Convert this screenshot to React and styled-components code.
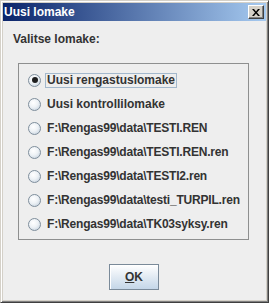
import React, { useState } from "react";
import styled, { createGlobalStyle } from "styled-components";

const Global = createGlobalStyle`
  html, body { margin: 0; padding: 0; background: #d4d0c8; }
  body { font-family: "Liberation Sans", Arial, sans-serif; }
`;

const Window = styled.div`
  width: 269px;
  height: 303px;
  box-sizing: border-box;
  display: flex;
  flex-direction: column;
  background: #d4d0c8;
  border-top: 1px solid #d4d0c8;
  border-left: 1px solid #d4d0c8;
  border-right: 1px solid #404040;
  border-bottom: 1px solid #404040;
  box-shadow: inset 1px 1px 0 #ffffff, inset -1px -1px 0 #808080;
  padding: 2px;
`;

const TitleBar = styled.div`
  height: 18px;
  flex: none;
  display: flex;
  align-items: center;
  justify-content: space-between;
  padding: 0 2px 0 1px;
  background: linear-gradient(to right, #0a246a, #a6caf0);
`;

const Title = styled.span`
  color: #ffffff;
  font-weight: bold;
  font-size: 12px;
  line-height: 18px;
`;

const CloseButton = styled.div`
  width: 16px;
  height: 14px;
  box-sizing: border-box;
  background: #d4d0c8;
  border-top: 1px solid #ffffff;
  border-left: 1px solid #ffffff;
  border-right: 1px solid #404040;
  border-bottom: 1px solid #404040;
  box-shadow: inset -1px -1px 0 #808080;
  display: flex;
  align-items: center;
  justify-content: center;
`;

const Content = styled.div`
  flex: 1;
  background: #eeeeee;
  display: flex;
  flex-direction: column;
  padding: 11px 17px 0 10px;
`;

const Label = styled.div`
  color: #333333;
  font-weight: bold;
  font-size: 12px;
  line-height: 15px;
  margin-bottom: 16px;
`;

const Group = styled.div`
  margin-left: 5px;
  border: 1px solid #8e8f8f;
  padding: 4px 0 3px 9px;
  display: flex;
  flex-direction: column;
`;

const Row = styled.label`
  height: 24px;
  display: flex;
  align-items: center;
  gap: 4px;
  cursor: default;
`;

const RadioCircle = styled.span`
  width: 13px;
  height: 13px;
  box-sizing: border-box;
  border-radius: 50%;
  border: 1px solid #7f8e9c;
  background: radial-gradient(circle at 40% 35%, #ffffff 0%, #eef2f6 45%, #bccbd9 100%);
  display: flex;
  align-items: center;
  justify-content: center;
  flex: none;
`;

const Dot = styled.span`
  width: 6px;
  height: 6px;
  border-radius: 50%;
  background: #1e1e1e;
`;

const RowText = styled.span`
  color: #333333;
  font-weight: bold;
  font-size: 12px;
  line-height: 13px;
  padding: 0 1px;
  letter-spacing: ${(p) => (p.$path ? "-0.2px" : "0")};
  border: 1px solid ${(p) => (p.$focused ? "#a3b8cc" : "transparent")};
`;

const Footer = styled.div`
  flex: 1;
  display: flex;
  align-items: flex-start;
  justify-content: center;
  padding-top: 24px;
`;

const OkButton = styled.button`
  width: 50px;
  height: 26px;
  box-sizing: border-box;
  border: 1px solid #7a8a99;
  background: linear-gradient(to bottom, #ffffff 0%, #e4ecf4 45%, #c4d6e8 100%);
  box-shadow: inset 1px 1px 0 #ffffff;
  font-family: "Liberation Sans", Arial, sans-serif;
  font-weight: bold;
  font-size: 12px;
  color: #333333;
  padding: 0;
  margin-left: 6px;
  u { text-decoration: underline; }
`;

const items = [
  "Uusi rengastuslomake",
  "Uusi kontrollilomake",
  "F:\\Rengas99\\data\\TESTI.REN",
  "F:\\Rengas99\\data\\TESTI.REN.ren",
  "F:\\Rengas99\\data\\TESTI2.ren",
  "F:\\Rengas99\\data\\testi_TURPIL.ren",
  "F:\\Rengas99\\data\\TK03syksy.ren",
];

export default function App() {
  const [sel, setSel] = useState(0);
  return (
    <>
      <Global />
      <Window>
        <TitleBar>
          <Title>Uusi lomake</Title>
          <CloseButton>
            <svg width="8" height="7" viewBox="0 0 8 7">
              <path d="M0 0h2l2 2.5L6 0h2L5 3.5 8 7H6L4 4.5 2 7H0l3-3.5z" fill="#000" />
            </svg>
          </CloseButton>
        </TitleBar>
        <Content>
          <Label>Valitse lomake:</Label>
          <Group>
            {items.map((t, i) => (
              <Row key={i} onClick={() => setSel(i)}>
                <RadioCircle>{sel === i && <Dot />}</RadioCircle>
                <RowText $focused={i === 0} $path={i > 1}>{t}</RowText>
              </Row>
            ))}
          </Group>
          <Footer>
            <OkButton>
              <u>O</u>K
            </OkButton>
          </Footer>
        </Content>
      </Window>
    </>
  );
}
